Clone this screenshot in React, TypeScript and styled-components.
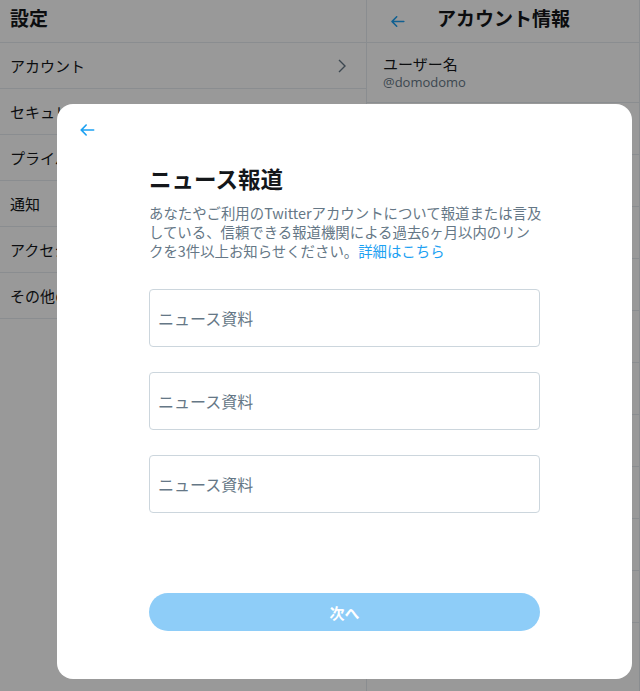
import React from 'react'
import styled, { createGlobalStyle } from 'styled-components'

const GlobalStyle = createGlobalStyle`
  * { box-sizing: border-box; }
  html, body { margin: 0; padding: 0; background: #ffffff; }
  body {
    font-family: "Noto Sans CJK JP", "Noto Sans", "Liberation Sans", sans-serif;
    color: #14171a;
  }
`

const Page = styled.div`
  display: flex;
  width: 640px;
  height: 691px;
  overflow: hidden;
`

const Column = styled.section<{ width: number }>`
  width: ${(p) => p.width}px;
  flex-shrink: 0;
  border-right: 1px solid #e6ecf0;
  display: flex;
  flex-direction: column;
`

const Header = styled.header<{ inset?: number; gap?: number }>`
  height: 43px;
  display: flex;
  align-items: center;
  gap: ${(p) => p.gap || 0}px;
  padding: 0 10px 0 ${(p) => p.inset || 10}px;
  border-bottom: 1px solid #e6ecf0;
`

const HeaderTitle = styled.h2`
  margin: 0;
  font-size: 19px;
  font-weight: 700;
  line-height: 24px;
  padding-bottom: 6px;
`

const BackIcon = styled.svg<{ size: number }>`
  width: ${(p) => p.size}px;
  height: ${(p) => p.size}px;
  fill: #1da1f2;
  flex-shrink: 0;
`

const MenuRow = styled.div`
  height: 46px;
  display: flex;
  align-items: center;
  justify-content: space-between;
  padding: 0 18px 0 10px;
  border-bottom: 1px solid #e6ecf0;
  font-size: 15px;
`

const Chevron = styled.svg`
  width: 12px;
  height: 16px;
  stroke: #657786;
  stroke-width: 1.4;
  fill: none;
`

const InfoRow = styled.div<{ tall?: boolean }>`
  height: ${(p) => (p.tall ? 60 : 52)}px;
  display: flex;
  flex-direction: column;
  justify-content: center;
  padding: 0 16px;
  border-bottom: 1px solid #e6ecf0;
`

const InfoLabel = styled.div`
  font-size: 15px;
  line-height: 20px;
`

const InfoValue = styled.div`
  font-size: 13px;
  line-height: 17px;
  color: #657786;
  font-family: "Open Sans", "Noto Sans", sans-serif;
`

const Overlay = styled.div`
  position: fixed;
  inset: 0;
  background: rgba(0, 0, 0, 0.4);
  padding: 104px 0 0 57px;
`

const Modal = styled.div`
  width: 575px;
  height: 575px;
  background: #ffffff;
  border-radius: 16px;
  display: flex;
  flex-direction: column;
  padding-bottom: 48px;
`

const ModalTop = styled.div`
  height: 50px;
  display: flex;
  align-items: center;
  padding: 2px 0 0 20px;
`

const Content = styled.div`
  width: 391px;
  margin: 0 auto;
  flex: 1;
  display: flex;
  flex-direction: column;
  padding-top: 10px;
`

const Title = styled.h1`
  margin: 0;
  font-size: 22.5px;
  line-height: 28px;
  font-weight: 700;
  color: #14171a;
`

const Lead = styled.p`
  margin: 11px 0 0;
  font-size: 14.4px;
  line-height: 19px;
  color: #657786;
  white-space: nowrap;
`

const Link = styled.a`
  color: #1da1f2;
  text-decoration: none;
`

const Fields = styled.div`
  display: flex;
  flex-direction: column;
  gap: 25px;
  margin-top: 29px;
`

const Field = styled.input`
  width: 100%;
  height: 58px;
  border: 1px solid #ccd6dd;
  border-radius: 4px;
  padding: 0 8px;
  font-family: inherit;
  font-size: 16px;
  color: #14171a;
  outline: none;
  &::placeholder {
    color: #657786;
  }
`

const NextButton = styled.button`
  margin-top: auto;
  width: 100%;
  height: 38px;
  border: none;
  border-radius: 19px;
  background: #8ecdf8;
  color: #ffffff;
  font-family: inherit;
  font-size: 15px;
  font-weight: 700;
`

const arrowPath =
  'M20 11H7.414l4.293-4.293c.39-.39.39-1.023 0-1.414s-1.023-.39-1.414 0l-6 6c-.39.39-.39 1.023 0 1.414l6 6c.195.195.45.293.707.293s.512-.098.707-.293c.39-.39.39-1.023 0-1.414L7.414 13H20c.553 0 1-.447 1-1s-.447-1-1-1z'

const menu = ['アカウント', 'セキュリティ', 'プライバシーとセーフティ', '通知', 'アクセシビリティ、表示、言語', 'その他のリソース']

const info = [
  { label: '電話', value: '' },
  { label: 'メールアドレス', value: 'domo@example.com' },
  { label: '認証済み', value: 'いいえ' },
  { label: '保護されたツイート', value: 'いいえ' },
  { label: 'アカウント作成日', value: '2012年5月1日' },
  { label: '国', value: '日本' },
  { label: '言語', value: '日本語' },
  { label: '性別', value: '' },
  { label: '生年月日', value: '' },
  { label: '年齢', value: '' },
]

function App() {
  return (
    <>
      <GlobalStyle />
      <Page>
        <Column width={367}>
          <Header>
            <HeaderTitle>設定</HeaderTitle>
          </Header>
          {menu.map((m, i) => (
            <MenuRow key={m}>
              <span>{m}</span>
              {i === 0 && (
                <Chevron viewBox="0 0 12 16">
                  <polyline points="3,2 9,8 3,14" />
                </Chevron>
              )}
            </MenuRow>
          ))}
        </Column>
        <Column width={273}>
          <Header inset={21} gap={30}>
            <BackIcon size={19} viewBox="0 0 24 24">
              <path d={arrowPath} />
            </BackIcon>
            <HeaderTitle>アカウント情報</HeaderTitle>
          </Header>
          <InfoRow tall>
            <InfoLabel>ユーザー名</InfoLabel>
            <InfoValue>@domodomo</InfoValue>
          </InfoRow>
          {info.map((r) => (
            <InfoRow key={r.label}>
              <InfoLabel>{r.label}</InfoLabel>
              {r.value && <InfoValue>{r.value}</InfoValue>}
            </InfoRow>
          ))}
        </Column>
      </Page>
      <Overlay>
        <Modal>
          <ModalTop>
            <BackIcon size={20} viewBox="0 0 24 24">
              <path d={arrowPath} />
            </BackIcon>
          </ModalTop>
          <Content>
            <Title>ニュース報道</Title>
            <Lead>
              あなたやご利用のTwitterアカウントについて報道または言及
              <br />
              している、信頼できる報道機関による過去6ヶ月以内のリン
              <br />
              クを3件以上お知らせください。<Link href="#">詳細はこちら</Link>
            </Lead>
            <Fields>
              <Field placeholder="ニュース資料" />
              <Field placeholder="ニュース資料" />
              <Field placeholder="ニュース資料" />
            </Fields>
            <NextButton disabled>次へ</NextButton>
          </Content>
        </Modal>
      </Overlay>
    </>
  )
}

export default App
